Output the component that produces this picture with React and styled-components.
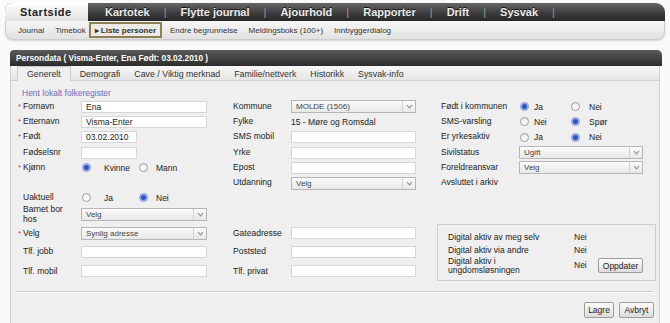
import React from 'react';
import styled, { createGlobalStyle } from 'styled-components';

const GlobalStyle = createGlobalStyle`
  body {
    margin: 0;
    background: #fafafa;
    font-family: "Liberation Sans", Arial, sans-serif;
  }
`;

const Page = styled.div`
  width: 670px;
  height: 323px;
  overflow: hidden;
  padding-top: 3px;
  box-sizing: border-box;
`;

const TopNav = styled.div`
  margin-left: 5px;
  width: 660px;
`;

const MainBar = styled.div`
  display: flex;
  height: 18px;
  background: linear-gradient(#666, #3e3e3e 55%, #262626);
  border-radius: 7px 9px 0 0;
`;

const HomeTab = styled.div`
  width: 83px;
  box-sizing: border-box;
  padding-left: 15px;
  display: flex;
  align-items: center;
  background: linear-gradient(#fefefe, #e2e2e2);
  border-radius: 7px 0 0 0;
  font-size: 11px;
  font-weight: bold;
  letter-spacing: 0.5px;
  color: #222;
`;

const MainItem = styled.span`
  display: flex;
  align-items: center;
  margin-left: ${p => p.$first ? 17 : 0}px;
  font-size: 11px;
  font-weight: bold;
  color: #ececec;
  text-shadow: 0 -1px 0 #111;
`;

const Pipe = styled.span`
  display: flex;
  align-items: center;
  margin: 0 14px;
  font-size: 11px;
  color: #9a9a9a;
`;

const SubBar = styled.div`
  height: 19px;
  box-sizing: border-box;
  display: flex;
  align-items: center;
  gap: 11px;
  padding-left: 12px;
  background: linear-gradient(#f6f6f6, #e1e1e1);
  border: 1px solid #cdcdcd;
  border-top: none;
  border-radius: 0 0 8px 8px;
  box-shadow: 0 1px 2px rgba(0, 0, 0, 0.15);
`;

const SubItem = styled.span`
  font-size: 8px;
  color: #333;
  ${p => p.$active && `
    font-weight: bold;
    height: 16px;
    box-sizing: border-box;
    display: flex;
    align-items: center;
    padding: 0 4px;
    margin: 0 -3px 0 -8px;
    border: 2px solid #8c8058;
    background: #eceae2;
  `}
`;

const Panel = styled.div`
  margin: 10px 0 0 10px;
  width: 652px;
`;

const Header = styled.div`
  height: 16px;
  display: flex;
  align-items: center;
  padding-left: 6px;
  background: linear-gradient(#5a5a5a, #2c2c2c);
  border-radius: 4px 5px 0 0;
  color: #fff;
  font-size: 8.3px;
  font-weight: bold;
`;

const TabBar = styled.div`
  height: 15px;
  box-sizing: border-box;
  display: flex;
  align-items: flex-end;
  padding-left: 6px;
  background: linear-gradient(#f8f8f8, #e4e4e4);
  border: 1px solid #cfcfcf;
  border-top: none;
  margin-right: 2px;
`;

const Tab = styled.div`
  height: ${p => p.$active ? 15 : 13}px;
  box-sizing: border-box;
  display: flex;
  align-items: center;
  padding: 0 ${p => p.$active ? 9 : 7}px;
  margin-right: ${p => p.$active ? 2 : 0}px;
  margin-bottom: ${p => p.$active ? -1 : 0}px;
  font-size: 8.8px;
  color: #333;
  ${p => p.$active && `
    background: #efefef;
    border: 1px solid #c8c8c8;
    border-bottom: none;
  `}
`;

const Content = styled.div`
  height: 245px;
  box-sizing: border-box;
  padding: 6px 5px 0 7px;
  margin-right: 2px;
  background: #efefef;
  border-left: 1px solid #cfcfcf;
  border-right: 1px solid #cfcfcf;
`;

const FetchLink = styled.div`
  height: 12px;
  line-height: 12px;
  margin-left: 4px;
  font-size: 8.5px;
  color: #6c6cb4;
`;

const FormGrid = styled.div`
  display: grid;
  grid-template-columns: 63px 152px 58px 150px 78px 137px;
  grid-template-rows: repeat(6, 15.3px) 14px 20px 17px 20px 19px;
  align-items: center;
`;

const Label = styled.div`
  display: flex;
  align-items: center;
  font-size: 8.5px;
  line-height: 9.5px;
  color: #222;
`;

const Star = styled.span`
  width: 5px;
  align-self: flex-start;
  font-size: 8px;
  color: #e03030;
`;

const Value = styled.div`
  font-size: 8.5px;
  color: #222;
`;

const TextInput = styled.input`
  width: ${p => p.$w}px;
  height: 12px;
  box-sizing: border-box;
  padding: 0 4px;
  border: 1px solid #d6d6d6;
  background: #fff;
  font-family: "Liberation Sans", Arial, sans-serif;
  font-size: 8.5px;
  color: #222;
  outline: none;
`;

const SelectBox = styled.div`
  width: ${p => p.$w}px;
  height: 13px;
  box-sizing: border-box;
  display: flex;
  align-items: center;
  border: 1px solid #b6b6b6;
  background: linear-gradient(#fbfbfb, #e8e8e8);
  font-size: 8px;
  color: #444;
`;

const SelectText = styled.span`
  flex: 1;
  padding-left: 4px;
`;

const Arrow = styled.span`
  width: 12px;
  height: 100%;
  display: flex;
  align-items: center;
  justify-content: center;
  border-left: 1px solid #d2d2d2;
`;

const RadioGroup = styled.div`
  display: flex;
  padding-left: 1px;
`;

const RadioOption = styled.div`
  display: flex;
  align-items: center;
  width: ${p => p.$w ? `${p.$w}px` : 'auto'};
  gap: ${p => p.$gap}px;
  font-size: 8.5px;
  color: #222;
`;

const RadioDot = styled.span`
  width: 9px;
  height: 9px;
  box-sizing: border-box;
  border-radius: 50%;
  border: 1px solid ${p => p.$on ? '#7f92d8' : '#9c9c9c'};
  background: ${p => p.$on
    ? 'radial-gradient(circle, #2f4fc8 0 1.8px, #5f7ee0 2.6px, #dfe6fb 3.6px)'
    : 'linear-gradient(#ececec, #ffffff)'};
`;

const Cell = styled.div``;

const DigitalBox = styled.div`
  grid-column: 5 / 7;
  grid-row: 9 / 12;
  align-self: stretch;
  margin: -1px 0 0 -4px;
  display: grid;
  grid-template-columns: 126px 24px auto;
  grid-template-rows: 13px 13px 18px;
  align-content: start;
  align-items: center;
  padding: 6px 0 0 10px;
  border: 1px solid #cdcdcd;
`;

const BoxText = styled.div`
  font-size: 8.5px;
  line-height: 9px;
  color: #222;
`;

const Button = styled.button`
  height: ${p => p.$h || 16}px;
  width: ${p => p.$w}px;
  padding: 0;
  font-family: "Liberation Sans", Arial, sans-serif;
  font-size: 8.5px;
  color: #222;
  border: 1px solid #9c9c9c;
  border-radius: 2px;
  background: linear-gradient(#fdfdfd, #dcdcdc);
`;

const Divider = styled.div`
  margin: 10px 1px 0 -2px;
  border-top: 1px solid #c9c9c9;
  border-bottom: 1px solid #fbfbfb;
`;

const Footer = styled.div`
  display: flex;
  justify-content: flex-end;
  gap: 5px;
  padding-top: 9px;
`;

const Chevron = () => (
  <svg width="7" height="5" viewBox="0 0 7 5">
    <path d="M1 1 L3.5 3.8 L6 1" fill="none" stroke="#8a8a8a" strokeWidth="1.1" />
  </svg>
);

const Select = ({ w, children }) => (
  <SelectBox $w={w}>
    <SelectText>{children}</SelectText>
    <Arrow><Chevron /></Arrow>
  </SelectBox>
);

const Radios = ({ options }) => (
  <RadioGroup>
    {options.map((o) => (
      <RadioOption key={o.label} $w={o.w} $gap={o.gap}>
        <RadioDot $on={o.on} />
        {o.label}
      </RadioOption>
    ))}
  </RadioGroup>
);

const LeftLabel = ({ req, children }) => (
  <Label>
    <Star>{req ? '*' : ''}</Star>
    <span>{children}</span>
  </Label>
);

const mainItems = ['Kartotek', 'Flytte journal', 'Ajourhold', 'Rapporter', 'Drift', 'Sysvak'];
const subItems = ['Journal', 'Timebok', 'Liste personer', 'Endre begrunnelse', 'Meldingsboks (100+)', 'Innbyggerdialog'];
const tabs = ['Generelt', 'Demografi', 'Cave / Viktig merknad', 'Familie/nettverk', 'Historikk', 'Sysvak-info'];

const leftRadio = (a, b, first) => [
  { label: a, on: first, w: 57, gap: 13 },
  { label: b, on: !first, gap: 8 },
];
const rightRadio = (a, b, first) => [
  { label: a, on: first, w: 51, gap: 5 },
  { label: b, on: !first, gap: 9 },
];

export default function App() {
  return (
    <Page>
      <GlobalStyle />
      <TopNav>
        <MainBar>
          <HomeTab>Startside</HomeTab>
          {mainItems.map((item, i) => (
            <React.Fragment key={item}>
              <MainItem $first={i === 0}>{item}</MainItem>
              <Pipe>|</Pipe>
            </React.Fragment>
          ))}
        </MainBar>
        <SubBar>
          {subItems.map((item) => (
            <SubItem key={item} $active={item === 'Liste personer'}>
              {item === 'Liste personer' ? '▸ ' + item : item}
            </SubItem>
          ))}
        </SubBar>
      </TopNav>

      <Panel>
        <Header>Persondata ( Visma-Enter, Ena Født: 03.02.2010 )</Header>
        <TabBar>
          {tabs.map((t, i) => (
            <Tab key={t} $active={i === 0}>{t}</Tab>
          ))}
        </TabBar>
        <Content>
          <FetchLink>Hent lokalt folkeregister</FetchLink>
          <FormGrid>
            <LeftLabel req>Fornavn</LeftLabel>
            <TextInput $w={126} readOnly defaultValue="Ena" />
            <Label>Kommune</Label>
            <Select w={125}>MOLDE (1506)</Select>
            <Label>Født i kommunen</Label>
            <Radios options={rightRadio('Ja', 'Nei', true)} />

            <LeftLabel req>Etternavn</LeftLabel>
            <TextInput $w={126} readOnly defaultValue="Visma-Enter" />
            <Label>Fylke</Label>
            <Value>15 - Møre og Romsdal</Value>
            <Label>SMS-varsling</Label>
            <Radios options={rightRadio('Nei', 'Spør', false)} />

            <LeftLabel req>Født</LeftLabel>
            <TextInput $w={56} readOnly defaultValue="03.02.2010" />
            <Label>SMS mobil</Label>
            <TextInput $w={125} readOnly />
            <Label>Er yrkesaktiv</Label>
            <Radios options={rightRadio('Ja', 'Nei', false)} />

            <LeftLabel>Fødselsnr</LeftLabel>
            <TextInput $w={56} readOnly />
            <Label>Yrke</Label>
            <TextInput $w={125} readOnly />
            <Label>Sivilstatus</Label>
            <Select w={124}>Ugift</Select>

            <LeftLabel req>Kjønn</LeftLabel>
            <Radios options={leftRadio('Kvinne', 'Mann', true)} />
            <Label>Epost</Label>
            <TextInput $w={125} readOnly />
            <Label>Foreldreansvar</Label>
            <Select w={124}>Velg</Select>

            <Cell />
            <Cell />
            <Label>Utdanning</Label>
            <Select w={125}>Velg</Select>
            <Label>Avsluttet i arkiv</Label>
            <Cell />

            <LeftLabel>Uaktuell</LeftLabel>
            <Radios options={leftRadio('Ja', 'Nei', false)} />
            <Cell />
            <Cell />
            <Cell />
            <Cell />

            <LeftLabel>Barnet bor<br />hos</LeftLabel>
            <Select w={126}>Velg</Select>
            <Cell />
            <Cell />
            <Cell />
            <Cell />

            <DigitalBox>
              <BoxText>Digital aktiv av meg selv</BoxText>
              <BoxText>Nei</BoxText>
              <Cell />
              <BoxText>Digital aktiv via andre</BoxText>
              <BoxText>Nei</BoxText>
              <Cell />
              <BoxText>Digital aktiv i<br />ungdomsløsningen</BoxText>
              <BoxText>Nei</BoxText>
              <Button $w={45} $h={15}>Oppdater</Button>
            </DigitalBox>

            <LeftLabel req>Velg</LeftLabel>
            <Select w={126}>Synlig adresse</Select>
            <Label>Gateadresse</Label>
            <TextInput $w={125} readOnly />

            <LeftLabel>Tlf. jobb</LeftLabel>
            <TextInput $w={126} readOnly />
            <Label>Poststed</Label>
            <TextInput $w={125} readOnly />

            <LeftLabel>Tlf. mobil</LeftLabel>
            <TextInput $w={126} readOnly />
            <Label>Tlf. privat</Label>
            <TextInput $w={125} readOnly />
          </FormGrid>
          <Divider />
          <Footer>
            <Button $w={30}>Lagre</Button>
            <Button $w={35}>Avbryt</Button>
          </Footer>
        </Content>
      </Panel>
    </Page>
  );
}
